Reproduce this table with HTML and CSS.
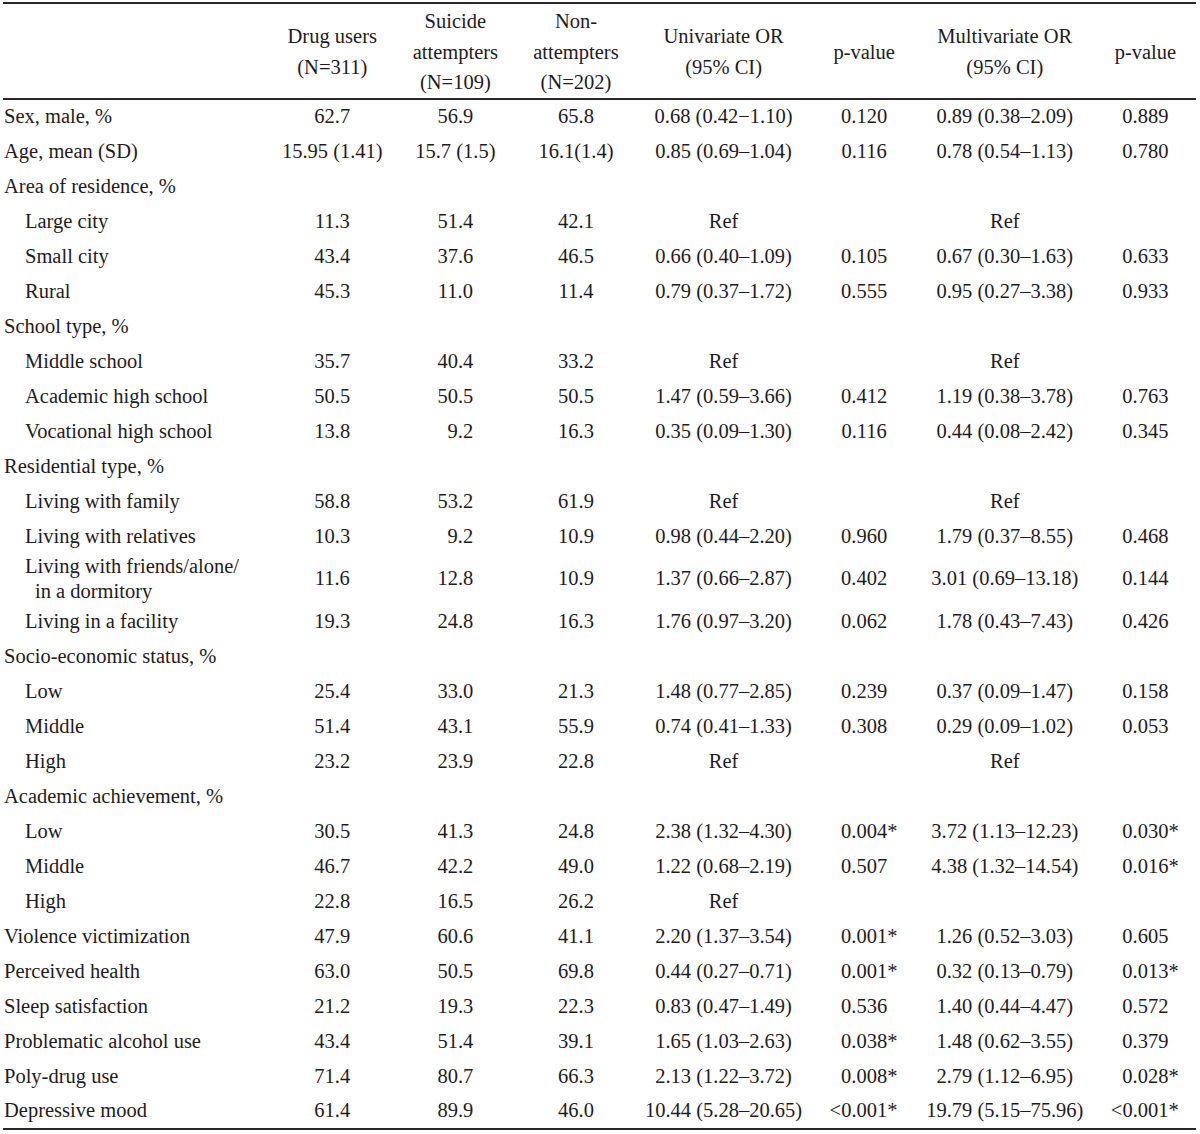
FILE: index.html
```html
<!DOCTYPE html>
<html lang="en">
<head>
    <meta charset="UTF-8">
    <title>Risk factors for suicide attempts among adolescent drug users</title>
    <link rel="stylesheet" href="styles.css">
</head>
<body>
    <table class="stats">
        <colgroup>
            <col class="c-label">
            <col class="c-n">
            <col class="c-sa">
            <col class="c-na">
            <col class="c-or">
            <col class="c-p">
            <col class="c-or">
            <col class="c-p">
        </colgroup>
        <thead>
            <tr>
                <th></th>
                <th>Drug users<br>(N=311)</th>
                <th>Suicide<br>attempters<br>(N=109)</th>
                <th>Non-<br>attempters<br>(N=202)</th>
                <th>Univariate OR<br>(95% CI)</th>
                <th>p-value</th>
                <th>Multivariate OR<br>(95% CI)</th>
                <th>p-value</th>
            </tr>
        </thead>
        <tbody>
            <tr><td>Sex, male, %</td><td>62.7</td><td>56.9</td><td>65.8</td><td>0.68 (0.42&minus;1.10)</td><td>0.120</td><td>0.89 (0.38&ndash;2.09)</td><td>0.889</td></tr>
            <tr><td>Age, mean (SD)</td><td>15.95 (1.41)</td><td>15.7 (1.5)</td><td>16.1(1.4)</td><td>0.85 (0.69&ndash;1.04)</td><td>0.116</td><td>0.78 (0.54&ndash;1.13)</td><td>0.780</td></tr>

            <tr class="group"><td colspan="8">Area of residence, %</td></tr>
            <tr class="sub"><td>Large city</td><td>11.3</td><td>51.4</td><td>42.1</td><td>Ref</td><td></td><td>Ref</td><td></td></tr>
            <tr class="sub"><td>Small city</td><td>43.4</td><td>37.6</td><td>46.5</td><td>0.66 (0.40&ndash;1.09)</td><td>0.105</td><td>0.67 (0.30&ndash;1.63)</td><td>0.633</td></tr>
            <tr class="sub"><td>Rural</td><td>45.3</td><td>11.0</td><td>11.4</td><td>0.79 (0.37&ndash;1.72)</td><td>0.555</td><td>0.95 (0.27&ndash;3.38)</td><td>0.933</td></tr>

            <tr class="group"><td colspan="8">School type, %</td></tr>
            <tr class="sub"><td>Middle school</td><td>35.7</td><td>40.4</td><td>33.2</td><td>Ref</td><td></td><td>Ref</td><td></td></tr>
            <tr class="sub"><td>Academic high school</td><td>50.5</td><td>50.5</td><td>50.5</td><td>1.47 (0.59&ndash;3.66)</td><td>0.412</td><td>1.19 (0.38&ndash;3.78)</td><td>0.763</td></tr>
            <tr class="sub"><td>Vocational high school</td><td>13.8</td><td class="shift">9.2</td><td>16.3</td><td>0.35 (0.09&ndash;1.30)</td><td>0.116</td><td>0.44 (0.08&ndash;2.42)</td><td>0.345</td></tr>

            <tr class="group"><td colspan="8">Residential type, %</td></tr>
            <tr class="sub"><td>Living with family</td><td>58.8</td><td>53.2</td><td>61.9</td><td>Ref</td><td></td><td>Ref</td><td></td></tr>
            <tr class="sub"><td>Living with relatives</td><td>10.3</td><td class="shift">9.2</td><td>10.9</td><td>0.98 (0.44&ndash;2.20)</td><td>0.960</td><td>1.79 (0.37&ndash;8.55)</td><td>0.468</td></tr>
            <tr class="sub tall"><td>Living with friends/alone/<br>in a dormitory</td><td>11.6</td><td>12.8</td><td>10.9</td><td>1.37 (0.66&ndash;2.87)</td><td>0.402</td><td>3.01 (0.69&ndash;13.18)</td><td>0.144</td></tr>
            <tr class="sub"><td>Living in a facility</td><td>19.3</td><td>24.8</td><td>16.3</td><td>1.76 (0.97&ndash;3.20)</td><td>0.062</td><td>1.78 (0.43&ndash;7.43)</td><td>0.426</td></tr>

            <tr class="group"><td colspan="8">Socio-economic status, %</td></tr>
            <tr class="sub"><td>Low</td><td>25.4</td><td>33.0</td><td>21.3</td><td>1.48 (0.77&ndash;2.85)</td><td>0.239</td><td>0.37 (0.09&ndash;1.47)</td><td>0.158</td></tr>
            <tr class="sub"><td>Middle</td><td>51.4</td><td>43.1</td><td>55.9</td><td>0.74 (0.41&ndash;1.33)</td><td>0.308</td><td>0.29 (0.09&ndash;1.02)</td><td>0.053</td></tr>
            <tr class="sub"><td>High</td><td>23.2</td><td>23.9</td><td>22.8</td><td>Ref</td><td></td><td>Ref</td><td></td></tr>

            <tr class="group"><td colspan="8">Academic achievement, %</td></tr>
            <tr class="sub"><td>Low</td><td>30.5</td><td>41.3</td><td>24.8</td><td>2.38 (1.32&ndash;4.30)</td><td>0.004<span class="star">*</span></td><td>3.72 (1.13&ndash;12.23)</td><td>0.030<span class="star">*</span></td></tr>
            <tr class="sub"><td>Middle</td><td>46.7</td><td>42.2</td><td>49.0</td><td>1.22 (0.68&ndash;2.19)</td><td>0.507</td><td>4.38 (1.32&ndash;14.54)</td><td>0.016<span class="star">*</span></td></tr>
            <tr class="sub"><td>High</td><td>22.8</td><td>16.5</td><td>26.2</td><td>Ref</td><td></td><td></td><td></td></tr>

            <tr><td>Violence victimization</td><td>47.9</td><td>60.6</td><td>41.1</td><td>2.20 (1.37&ndash;3.54)</td><td>0.001<span class="star">*</span></td><td>1.26 (0.52&ndash;3.03)</td><td>0.605</td></tr>
            <tr><td>Perceived health</td><td>63.0</td><td>50.5</td><td>69.8</td><td>0.44 (0.27&ndash;0.71)</td><td>0.001<span class="star">*</span></td><td>0.32 (0.13&ndash;0.79)</td><td>0.013<span class="star">*</span></td></tr>
            <tr><td>Sleep satisfaction</td><td>21.2</td><td>19.3</td><td>22.3</td><td>0.83 (0.47&ndash;1.49)</td><td>0.536</td><td>1.40 (0.44&ndash;4.47)</td><td>0.572</td></tr>
            <tr><td>Problematic alcohol use</td><td>43.4</td><td>51.4</td><td>39.1</td><td>1.65 (1.03&ndash;2.63)</td><td>0.038<span class="star">*</span></td><td>1.48 (0.62&ndash;3.55)</td><td>0.379</td></tr>
            <tr><td>Poly-drug use</td><td>71.4</td><td>80.7</td><td>66.3</td><td>2.13 (1.22&ndash;3.72)</td><td>0.008<span class="star">*</span></td><td>2.79 (1.12&ndash;6.95)</td><td>0.028<span class="star">*</span></td></tr>
            <tr><td>Depressive mood</td><td>61.4</td><td>89.9</td><td>46.0</td><td>10.44 (5.28&ndash;20.65)</td><td><span class="lt">&lt;</span>0.001<span class="star">*</span></td><td>19.79 (5.15&ndash;75.96)</td><td><span class="lt">&lt;</span>0.001<span class="star">*</span></td></tr>
        </tbody>
    </table>
</body>
</html>
```

FILE: styles.css
```css
* {
    margin: 0;
    padding: 0;
    box-sizing: border-box;
}

body {
    background: #fff;
    color: #1f1b1c;
    font-family: "Liberation Serif", "Times New Roman", serif;
    font-size: 20.5px;
}

.stats {
    width: 1193px;
    margin: 2px 0 0 3px;
    border-collapse: collapse;
    table-layout: fixed;
    border-top: 2px solid #2b2728;
    border-bottom: 2px solid #2b2728;
}

/* column widths */
.c-label { width: 269px; }
.c-n     { width: 120px; }
.c-sa    { width: 126px; }
.c-na    { width: 115px; }
.c-or    { width: 180px; }
.c-p     { width: 101px; }

.stats thead tr {
    border-bottom: 2px solid #2b2728;
}

.stats th {
    height: 93px;
    padding-top: 2px;
    font-weight: normal;
    line-height: 30.5px;
    text-align: center;
    vertical-align: middle;
}

.stats td {
    height: 35px;
    line-height: 25px;
    text-align: center;
    vertical-align: middle;
    white-space: nowrap;
}

.stats td:first-child {
    text-align: left;
    padding-left: 1px;
}

.stats .group td {
    text-align: left;
}

.stats .sub td:first-child {
    padding-left: 22px;
}

.stats .tall td {
    height: 48px;
}

.stats .tall td:first-child {
    padding-left: 32px;
    text-indent: -10px;
}

/* short values sit on the decimal line of the column */
.shift {
    padding-left: 10px;
}

/* hang the star and the "<" so the digits line up */
.star {
    margin-right: -0.5em;
}

.lt {
    margin-left: -0.564em;
}
```
